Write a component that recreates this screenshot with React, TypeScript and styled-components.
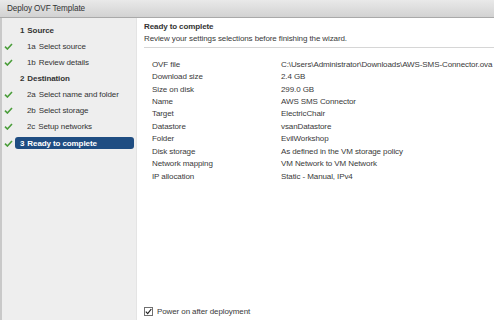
import React from "react";
import styled, { createGlobalStyle } from "styled-components";

const Global = createGlobalStyle`
  html, body { margin: 0; padding: 0; background: #fff; }
  body { font-family: "Liberation Sans", Arial, sans-serif; }
`;

const Window = styled.div`
  width: 494px;
  height: 320px;
  display: flex;
  flex-direction: column;
  overflow: hidden;
  font-size: 8px;
  letter-spacing: -0.1px;
  color: #3a3a3a;
`;

const TitleBar = styled.div`
  height: 17px;
  flex: none;
  display: flex;
  align-items: center;
  padding-left: 7px;
  background: linear-gradient(#e9e9e9, #d2d2d2);
  border-bottom: 1px solid #a9a9a9;
  color: #333;
  font-size: 8.2px;
`;

const Body = styled.div`
  flex: 1;
  display: flex;
  min-height: 0;
`;

const Sidebar = styled.div`
  width: 137px;
  flex: none;
  background: #eeeeee;
  border-left: 2px solid #c9c9c9;
  border-right: 1px solid #e4e4e4;
  padding-top: 4px;
  box-sizing: border-box;
  display: flex;
  flex-direction: column;
`;

const StepRow = styled.div`
  height: 16.15px;
  display: flex;
  align-items: center;
`;

const CheckSlot = styled.div`
  width: 13px;
  flex: none;
  display: flex;
  justify-content: center;
`;

const StepLabel = styled.div<{ $indent: number; $group?: boolean; $active?: boolean }>`
  flex: 1;
  margin-right: 2px;
  height: 12px;
  display: flex;
  align-items: center;
  padding-left: ${(p) => p.$indent}px;
  border-radius: 3px;
  font-weight: ${(p) => (p.$group || p.$active ? "bold" : "normal")};
  color: ${(p) => (p.$active ? "#fff" : "#333")};
  background: ${(p) => (p.$active ? "#1f4d82" : "transparent")};
  white-space: nowrap;
  gap: 3px;
`;

const Main = styled.div`
  flex: 1;
  display: flex;
  flex-direction: column;
  padding: 3px 0 2px 7px;
  min-width: 0;
`;

const Heading = styled.div`
  font-weight: bold;
  height: 12px;
  line-height: 12px;
  color: #333;
`;

const Sub = styled.div`
  height: 12px;
  line-height: 12px;
`;

const Separator = styled.div`
  height: 1px;
  background: #d6d6d6;
  margin-top: 2px;
`;

const Table = styled.div`
  display: grid;
  grid-template-columns: 129px 1fr;
  grid-auto-rows: 12.45px;
  align-items: center;
  padding: 10px 0 0 8px;
  white-space: nowrap;
`;

const Cell = styled.div``;

const Spacer = styled.div`
  flex: 1;
`;

const Footer = styled.label`
  display: flex;
  align-items: center;
  gap: 4px;
  height: 14px;
`;

const Box = styled.span`
  width: 9px;
  height: 9px;
  box-sizing: border-box;
  border: 1px solid #707070;
  background: #fff;
  display: flex;
  align-items: center;
  justify-content: center;
`;

const Check = () => (
  <svg width="9" height="7" viewBox="0 0 9 7">
    <path d="M1 3.6 L3.4 6 L8 1" fill="none" stroke="#4a9d3a" strokeWidth="1.6" />
  </svg>
);

const BoxCheck = () => (
  <svg width="7" height="7" viewBox="0 0 7 7">
    <path d="M0.8 3.6 L2.7 5.6 L6.3 1" fill="none" stroke="#222" strokeWidth="1.2" />
  </svg>
);

type Step = { num: string; label: string; group?: boolean; done?: boolean; active?: boolean };

const steps: Step[] = [
  { num: "1", label: "Source", group: true },
  { num: "1a", label: "Select source", done: true },
  { num: "1b", label: "Review details", done: true },
  { num: "2", label: "Destination", group: true },
  { num: "2a", label: "Select name and folder", done: true },
  { num: "2b", label: "Select storage", done: true },
  { num: "2c", label: "Setup networks", done: true },
  { num: "3", label: "Ready to complete", done: true, active: true },
];

const rows: [string, string][] = [
  ["OVF file", "C:\\Users\\Administrator\\Downloads\\AWS-SMS-Connector.ova"],
  ["Download size", "2.4 GB"],
  ["Size on disk", "299.0 GB"],
  ["Name", "AWS SMS Connector"],
  ["Target", "ElectricChair"],
  ["Datastore", "vsanDatastore"],
  ["Folder", "EvilWorkshop"],
  ["Disk storage", "As defined in the VM storage policy"],
  ["Network mapping", "VM Network to VM Network"],
  ["IP allocation", "Static - Manual, IPv4"],
];

export default function App() {
  return (
    <>
      <Global />
      <Window>
        <TitleBar>Deploy OVF Template</TitleBar>
        <Body>
          <Sidebar>
            {steps.map((s) => (
              <StepRow key={s.num}>
                <CheckSlot>{s.done ? <Check /> : null}</CheckSlot>
                <StepLabel
                  $indent={s.group || s.active ? 5 : 12}
                  $group={s.group}
                  $active={s.active}
                >
                  <span>{s.num}</span>
                  <span>{s.label}</span>
                </StepLabel>
              </StepRow>
            ))}
          </Sidebar>
          <Main>
            <Heading>Ready to complete</Heading>
            <Sub>Review your settings selections before finishing the wizard.</Sub>
            <Separator />
            <Table>
              {rows.map(([k, v]) => (
                <React.Fragment key={k}>
                  <Cell>{k}</Cell>
                  <Cell>{v}</Cell>
                </React.Fragment>
              ))}
            </Table>
            <Spacer />
            <Footer>
              <Box>
                <BoxCheck />
              </Box>
              Power on after deployment
            </Footer>
          </Main>
        </Body>
      </Window>
    </>
  );
}
